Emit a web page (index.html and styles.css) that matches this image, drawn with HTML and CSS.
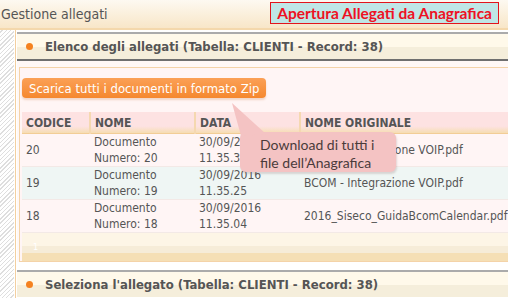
FILE: index.html
```html
<!DOCTYPE html>
<html lang="it">
<head>
    <meta charset="UTF-8">
    <meta name="viewport" content="width=device-width, initial-scale=1.0">
    <title>Gestione allegati</title>
    <link rel="stylesheet" href="styles.css">
</head>
<body>

<!-- Barra del titolo -->
<div class="topbar">
    <span class="page-title">Gestione allegati</span>
    <span class="note">Apertura Allegati da Anagrafica</span>
</div>

<div class="main">
    <div class="hatch"></div>
    <div class="content">

        <!-- Elenco allegati -->
        <section class="panel">
            <div class="panel-head"><span class="dot"></span>Elenco degli allegati (Tabella: CLIENTI - Record: 38)</div>
            <div class="panel-body">
                <div class="box">
                    <button class="zip">Scarica tutti i documenti in formato Zip</button>
                    <table class="grid">
                        <colgroup>
                            <col class="c-code">
                            <col class="c-name">
                            <col class="c-date">
                            <col>
                        </colgroup>
                        <thead>
                            <tr>
                                <th>CODICE</th>
                                <th>NOME</th>
                                <th>DATA</th>
                                <th>NOME ORIGINALE</th>
                            </tr>
                        </thead>
                        <tbody>
                            <tr>
                                <td>20</td>
                                <td>Documento<br>Numero: 20</td>
                                <td>30/09/2016<br>11.35.30</td>
                                <td>BCOM - Integrazione VOIP.pdf</td>
                            </tr>
                            <tr>
                                <td>19</td>
                                <td>Documento<br>Numero: 19</td>
                                <td>30/09/2016<br>11.35.25</td>
                                <td>BCOM - Integrazione VOIP.pdf</td>
                            </tr>
                            <tr>
                                <td>18</td>
                                <td>Documento<br>Numero: 18</td>
                                <td>30/09/2016<br>11.35.04</td>
                                <td>2016_Siseco_GuidaBcomCalendar.pdf</td>
                            </tr>
                        </tbody>
                    </table>
                    <div class="pager">1</div>
                </div>
            </div>
        </section>

        <!-- Dettaglio allegato -->
        <section class="panel panel-second">
            <div class="panel-head"><span class="dot"></span>Seleziona l'allegato (Tabella: CLIENTI - Record: 38)</div>
        </section>

    </div>
</div>

<!-- Nota esplicativa sul pulsante Zip -->
<div class="callout">Download di tutti i<br>file dell’Anagrafica</div>

</body>
</html>
```

FILE: styles.css
```css
body {
    font-family: "DejaVu Sans Condensed", "DejaVu Sans", sans-serif;
    font-stretch: condensed;
    margin: 0;
    padding: 0;
    width: 508px;
    height: 298px;
    overflow: hidden;
    position: relative;
    background-color: #fff;
    color: #555;
}

.topbar {
    display: flex;
    align-items: center;
    height: 28px;
    background: linear-gradient(#fdf9f1, #f8e6c8);
    border-bottom: 2px solid #f4d8ac;
}

.page-title {
    font-size: 14px;
    color: #555;
    padding-left: 1px;
}

.note {
    margin-left: auto;
    margin-right: 9px;
    margin-top: -2px;
    height: 20px;
    line-height: 20px;
    padding: 0 6px;
    border: 1px solid #e2141c;
    background-color: #bfe6e6;
    color: #ee1123;
    font-family: Lato, "Liberation Sans", sans-serif;
    font-stretch: normal;
    font-weight: bold;
    font-size: 15.5px;
}

.main {
    display: flex;
    height: 268px;
}

.hatch {
    width: 14px;
    flex-shrink: 0;
    background: repeating-linear-gradient(-45deg, #fff 0, #fff 2px, #dedede 2px, #dedede 3px);
}

.content {
    flex-shrink: 0;
    width: 620px;
    margin-left: 1px;
    padding-left: 1px;
    border-left: 1px solid #f3cf9f;
}

.panel {
    margin-top: 2px;
    border-top: 2px solid #ababab;
}

.panel-head {
    display: flex;
    align-items: center;
    height: 25px;
    padding-left: 9px;
    background: linear-gradient(#fff9ea 50%, #f5eedb 50%);
    border-bottom: 2px solid #6f6f6f;
    font-size: 13px;
    font-weight: bold;
    color: #555;
}

.dot {
    width: 7px;
    height: 7px;
    border-radius: 50%;
    background-color: #f58220;
    margin-right: 12px;
}

.panel-body {
    padding: 6px 0 0 2px;
    background-color: #fff8f6;
}

.box {
    border: 1px solid #f4d3a8;
    background-color: #fff5f5;
    padding: 10px 0 0 2px;
}

.zip {
    display: block;
    height: 20px;
    padding: 0 7px;
    border: none;
    border-radius: 4px;
    background: linear-gradient(#fba056, #f5882f);
    box-shadow: 0 2px 2px rgba(200, 120, 60, 0.25);
    color: #fff;
    font-family: inherit;
    font-stretch: condensed;
    font-size: 13px;
    cursor: pointer;
}

.grid {
    margin-top: 14px;
    border-collapse: collapse;
    table-layout: fixed;
    width: 600px;
}

.grid .c-code { width: 68px; }
.grid .c-name { width: 105px; }
.grid .c-date { width: 105px; }

.grid th {
    height: 21px;
    padding: 0 0 0 4px;
    text-align: left;
    font-size: 12px;
    font-weight: bold;
    color: #555;
    background: linear-gradient(#fde2e2 0, #fde2e2 68%, #f6ddb2 100%);
    border-right: 2px solid #f5d8b0;
    border-bottom: 1px solid #f2cd96;
}

.grid td {
    height: 32px;
    padding: 0 0 0 4px;
    font-size: 12px;
    line-height: 16px;
    color: #555;
    white-space: nowrap;
    border-bottom: 1px solid #f3e9e6;
}

.grid tbody tr:nth-child(odd) {
    background-color: #fff5f5;
}

.grid tbody tr:nth-child(even) {
    background-color: #eff6f4;
}

.pager {
    height: 28px;
    padding-left: 11px;
    box-sizing: border-box;
    padding-top: 9px;
    font-size: 9px;
    line-height: 10px;
    color: #fff;
    background: linear-gradient(#fdf5e6 0, #fdf5e6 13px, #f6ecd8 13px, #f6ecd8 20px, #f5dfb5 20px);
}

.panel-second {
    margin-top: 8px;
}

.panel-second .panel-head {
    border-bottom: none;
}

.callout {
    position: absolute;
    left: 240px;
    top: 132px;
    width: 136px;
    height: 36px;
    padding: 4px 0 0 20px;
    border-radius: 6px;
    background-color: #f4c3c3;
    box-shadow: 1px 2px 2px rgba(120, 80, 80, 0.2);
    font-family: Lato, "Liberation Sans", sans-serif;
    font-stretch: normal;
    font-size: 14px;
    line-height: 18px;
    color: #4a3b3b;
}

.callout::before {
    content: "";
    position: absolute;
    left: -8px;
    top: -29px;
    width: 36px;
    height: 33px;
    background-color: #f4c3c3;
    clip-path: polygon(0 0, 9px 33px, 34px 31px);
}
```
